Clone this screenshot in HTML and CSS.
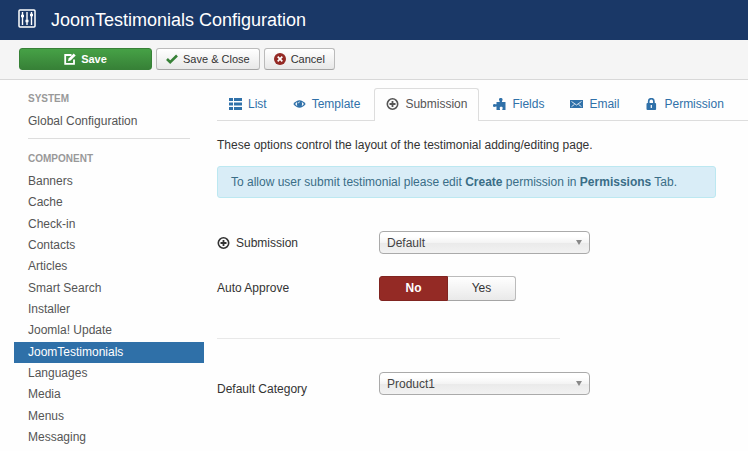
FILE: index.html
```html
<!DOCTYPE html>
<html lang="en">
<head>
    <meta charset="UTF-8">
    <meta name="viewport" content="width=device-width, initial-scale=1.0">
    <title>JoomTestimonials Configuration</title>
    <link rel="stylesheet" href="styles.css">
</head>
<body>

    <header class="header">
        <svg class="header-icon" viewBox="0 0 18 19" aria-hidden="true">
            <rect x="1" y="1" width="16" height="17" rx="1" fill="none" stroke="#fff" stroke-width="1.5"/>
            <path d="M4.5 3v13M9 3v13M13.5 3v13" stroke="#fff" stroke-width="1.4"/>
            <path d="M3 7h3M7.500 12h3M12 6h3" stroke="#fff" stroke-width="2.400"/>
        </svg>
        <h1>JoomTestimonials Configuration</h1>
    </header>

    <div class="toolbar">
        <button type="button" class="btn btn-save">
            <svg class="icon" viewBox="0 0 12 12" aria-hidden="true">
                <path d="M7.500 2H1.200v8.800H10V6.500" fill="none" stroke="#fff" stroke-width="1.800"/>
                <path d="M4 8.300l.6-2.800L9.700.4l2 2-5.100 5.200z" fill="#fff"/>
            </svg>
            Save
        </button>
        <button type="button" class="btn btn-apply">
            <svg class="icon" viewBox="0 0 12 12" aria-hidden="true">
                <path d="M1 6l3.200 3.200L11 2.500" fill="none" stroke="#378137" stroke-width="2.600"/>
            </svg>
            Save &amp; Close
        </button>
        <button type="button" class="btn btn-cancel">
            <svg class="icon" viewBox="0 0 12 12" aria-hidden="true">
                <circle cx="6" cy="6" r="6" fill="#942a25"/>
                <path d="M3.700 3.700l4.600 4.600M8.300 3.700L3.700 8.300" stroke="#fff" stroke-width="1.700"/>
            </svg>
            Cancel
        </button>
    </div>

    <div class="page">
        <nav class="sidebar">
            <h2 class="nav-header">System</h2>
            <a class="nav-link" href="#">Global Configuration</a>
            <hr class="nav-divider">
            <h2 class="nav-header">Component</h2>
            <ul class="nav-list">
                <li><a class="nav-link" href="#">Banners</a></li>
                <li><a class="nav-link" href="#">Cache</a></li>
                <li><a class="nav-link" href="#">Check-in</a></li>
                <li><a class="nav-link" href="#">Contacts</a></li>
                <li><a class="nav-link" href="#">Articles</a></li>
                <li><a class="nav-link" href="#">Smart Search</a></li>
                <li><a class="nav-link" href="#">Installer</a></li>
                <li><a class="nav-link" href="#">Joomla! Update</a></li>
                <li><a class="nav-link active" href="#">JoomTestimonials</a></li>
                <li><a class="nav-link" href="#">Languages</a></li>
                <li><a class="nav-link" href="#">Media</a></li>
                <li><a class="nav-link" href="#">Menus</a></li>
                <li><a class="nav-link" href="#">Messaging</a></li>
            </ul>
        </nav>

        <main class="content">
            <nav class="tabs">
                <a class="tab" href="#">
                    <svg class="tab-icon" viewBox="0 0 13 12" aria-hidden="true">
                        <path d="M0 0h4v3H0zM5 0h8v3H5zM0 4.500h4v3H0zM5 4.500h8v3H5zM0 9h4v3H0zM5 9h8v3H5z" fill="currentColor"/>
                    </svg>
                    List
                </a>
                <a class="tab" href="#">
                    <svg class="tab-icon" viewBox="0 0 13 12" aria-hidden="true">
                        <path d="M.3 6Q6.500-1.500 12.700 6 6.500 13.500.3 6z" fill="currentColor"/>
                        <path d="M2.200 6Q3 4.500 4.300 3.900 3.300 6 4.300 8.100 3 7.500 2.200 6zM10.800 6Q10 4.500 8.700 3.900 9.700 6 8.700 8.100 10 7.500 10.800 6z" fill="#fff"/>
                        <path d="M5.200 5.300q.3-1.300 1.500-1.400" fill="none" stroke="#fff" stroke-width=".9"/>
                    </svg>
                    Template
                </a>
                <a class="tab active" href="#">
                    <svg class="tab-icon" viewBox="0 0 13 12" aria-hidden="true">
                        <circle cx="6.500" cy="6" r="5.200" fill="none" stroke="currentColor" stroke-width="1.600"/>
                        <path d="M6.500 3v6M3.500 6h6" stroke="currentColor" stroke-width="1.800"/>
                    </svg>
                    Submission
                </a>
                <a class="tab" href="#">
                    <svg class="tab-icon" viewBox="0 0 13 12" aria-hidden="true">
                        <path d="M3.500 12V8.600C2.500 8.300 2 9 1.200 9 .4 9 0 8.200 0 7.400s.5-1.500 1.300-1.500 1.200.6 2.200.3V4h3.200C7 3 6 2.600 6 1.500S6.800 0 7.800 0s1.800.5 1.800 1.500S8.700 3 9 4h3.500v8H9.300c-.2-1 .4-1.300.4-2s-.6-1.200-1.500-1.200S6.700 9.300 6.700 10s.5 1 .3 2z" fill="currentColor"/>
                    </svg>
                    Fields
                </a>
                <a class="tab" href="#">
                    <svg class="tab-icon" viewBox="0 0 13 12" aria-hidden="true">
                        <path d="M0 2h13v8H0z" fill="currentColor"/>
                        <path d="M1.500 3.500l5 3.500 5-3.500M1.500 8.700l3-2.300M11.500 8.700l-3-2.300" fill="none" stroke="#fff" stroke-width=".8"/>
                    </svg>
                    Email
                </a>
                <a class="tab" href="#">
                    <svg class="tab-icon" viewBox="0 0 13 12" aria-hidden="true">
                        <path d="M3.700 6V3.300a2.600 2.600 0 0 1 5.200 0V6" fill="none" stroke="currentColor" stroke-width="1.700"/>
                        <rect x="1.500" y="5" width="9.600" height="7" rx="1" fill="currentColor"/>
                        <path d="M6.300 7v3" stroke="#fff" stroke-width="1.200"/>
                    </svg>
                    Permission
                </a>
            </nav>

            <p class="intro">These options control the layout of the testimonial adding/editing page.</p>

            <div class="alert">
                To allow user submit testimonial please edit <strong>Create</strong> permission in <strong>Permissions</strong> Tab.
            </div>

            <form class="form">
                <div class="control-group">
                    <label class="control-label" for="submission">
                        <svg class="tab-icon" viewBox="0 0 13 12" aria-hidden="true">
                            <circle cx="6.500" cy="6" r="5.200" fill="none" stroke="currentColor" stroke-width="1.600"/>
                            <path d="M6.500 3v6M3.500 6h6" stroke="currentColor" stroke-width="1.800"/>
                        </svg>
                        Submission
                    </label>
                    <div class="select">
                        <select id="submission">
                            <option>Default</option>
                        </select>
                    </div>
                </div>

                <div class="control-group" role="radiogroup" aria-labelledby="approve-label">
                    <span class="control-label" id="approve-label">Auto Approve</span>
                    <div class="btn-group">
                        <input type="radio" name="approve" id="approve-no" checked>
                        <label class="no" for="approve-no">No</label>
                        <input type="radio" name="approve" id="approve-yes">
                        <label class="yes" for="approve-yes">Yes</label>
                    </div>
                </div>

                <hr class="spacer">

                <div class="control-group">
                    <label class="control-label" for="category">Default Category</label>
                    <div class="select">
                        <select id="category">
                            <option>Product1</option>
                        </select>
                    </div>
                </div>
            </form>
        </main>
    </div>

</body>
</html>
```

FILE: styles.css
```css
* {
    box-sizing: border-box;
}

body {
    margin: 0;
    min-height: 100vh;
    display: flex;
    flex-direction: column;
    font-family: "Liberation Sans", Arial, sans-serif;
    font-size: 12px;
    line-height: 18px;
    color: #333;
    background-color: #fefefe;
}

a {
    color: #3071a9;
    text-decoration: none;
}

/* Header */
.header {
    display: flex;
    align-items: flex-start;
    gap: 15px;
    height: 40px;
    padding: 9px 18px 0;
    background-color: #1a3867;
    color: #fff;
}

.header-icon {
    width: 18px;
    height: 19px;
}

.header h1 {
    margin: 0;
    font-size: 18px;
    font-weight: normal;
    line-height: 22px;
}

/* Toolbar */
.toolbar {
    display: flex;
    gap: 4px;
    padding: 8px 19px 9px;
    background-color: #f5f5f5;
    border-bottom: 1px solid #d8d8d8;
}

.btn {
    display: flex;
    align-items: center;
    justify-content: center;
    gap: 5px;
    height: 22px;
    padding: 0 9px;
    font-family: inherit;
    font-size: 11px;
    color: #333;
    background: linear-gradient(#fff, #e8e8e8);
    border: 1px solid #bbb;
    border-bottom-color: #a5a5a5;
    border-radius: 3px;
    cursor: pointer;
}

.btn-save {
    width: 133px;
    font-weight: bold;
    color: #fff;
    background: linear-gradient(#46a146, #378137);
    border-color: #378137;
}

.icon {
    width: 12px;
    height: 12px;
}

/* Page */
.page {
    flex: 1;
    display: flex;
    gap: 13px;
    padding-left: 14px;
}

/* Sidebar */
.sidebar {
    flex: 0 0 189px;
    display: flex;
    flex-direction: column;
    padding: 10px 0 3px;
}

.nav-header {
    margin: 0;
    padding: 0 14px;
    font-size: 10px;
    line-height: 18px;
    text-transform: uppercase;
    color: #999;
}

.nav-link {
    display: block;
    padding: 0 14px;
    line-height: 21px;
    color: #555;
}

.sidebar > .nav-link {
    margin-top: 3px;
}

.nav-link.active {
    color: #fff;
    background-color: #2f70a8;
}

.nav-divider {
    width: 162px;
    margin: 6px 14px 11px;
    border: 0;
    border-top: 1px solid #ddd;
}

.nav-list {
    flex: 1;
    display: flex;
    flex-direction: column;
    justify-content: space-between;
    margin: 3px 0 0;
    padding: 0;
    list-style: none;
}

/* Content */
.content {
    flex: 1;
    min-width: 0;
    padding-top: 8px;
}

.tabs {
    display: flex;
    gap: 2px;
    border-bottom: 1px solid #ddd;
}

.tab {
    display: flex;
    align-items: center;
    gap: 6px;
    height: 32px;
    padding: 0 11px 2px;
    border: 1px solid transparent;
    border-bottom: 0;
    border-radius: 3px 3px 0 0;
}

.tab.active {
    height: 33px;
    margin-bottom: -1px;
    padding-bottom: 3px;
    color: #555;
    background-color: #fefefe;
    border-color: #ddd;
}

.tab-icon {
    width: 13px;
    height: 12px;
}

.intro {
    margin: 15px 0 12px;
}

.alert {
    max-width: 500px;
    margin-right: 32px;
    padding: 6px 13px;
    color: #3a6e87;
    background-color: #d9edf7;
    border: 1px solid #bce8f1;
    border-radius: 3px;
}

/* Form */
.form {
    padding-top: 33px;
}

.control-group {
    display: grid;
    grid-template-columns: 162px 211px;
    align-items: start;
    margin-bottom: 22px;
}

.control-label {
    display: flex;
    align-items: center;
    gap: 6px;
    padding-top: 3px;
}

.select {
    display: grid;
    align-items: center;
}

.select select {
    grid-area: 1 / 1;
    height: 23px;
    padding: 0 7px;
    font-family: inherit;
    font-size: 12px;
    color: #444;
    appearance: none;
    background: linear-gradient(#fff 20%, #f4f4f4 50%, #eaeaea 52%, #f2f2f2 100%);
    border: 1px solid #aaa;
    border-radius: 4px;
}

.select::after {
    content: "";
    grid-area: 1 / 1;
    justify-self: end;
    margin-right: 8px;
    border: 3px solid transparent;
    border-top: 5px solid #888;
    border-bottom: 0;
    pointer-events: none;
}

.btn-group {
    display: flex;
}

.btn-group input {
    appearance: none;
    width: 0;
    margin: 0;
}

.btn-group label {
    width: 68px;
    line-height: 23px;
    text-align: center;
    color: #333;
    background: linear-gradient(#fff, #e9e9e9);
    border: 1px solid #bbb;
    border-bottom-color: #a5a5a5;
    cursor: pointer;
}

.btn-group .no {
    width: 69px;
    border-radius: 3px 0 0 3px;
}

.btn-group .yes {
    border-left: 0;
    border-radius: 0 3px 3px 0;
}

.btn-group input:checked + label {
    font-weight: bold;
    color: #fff;
    background: #942a25;
    border-color: #802420;
}

.spacer {
    width: 343px;
    margin: 37px 0 33px;
    border: 0;
    border-top: 1px solid #e8e8e8;
}

.spacer + .control-group .control-label {
    padding-top: 8px;
}
```
